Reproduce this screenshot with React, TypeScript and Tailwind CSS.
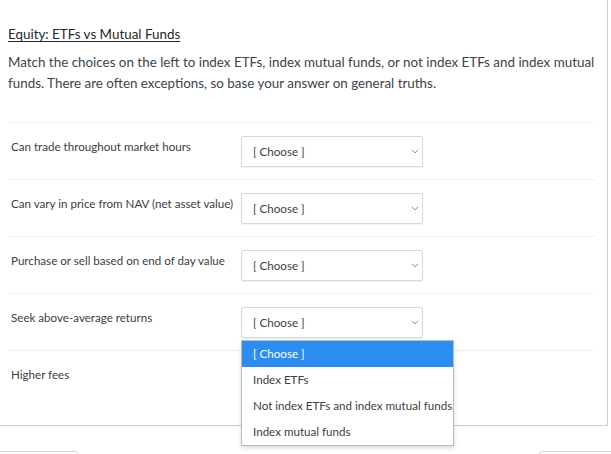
import React from "react";

const rows = [
  "Can trade throughout market hours",
  "Can vary in price from NAV (net asset value)",
  "Purchase or sell based on end of day value",
  "Seek above-average returns",
];

const options = [
  "[ Choose ]",
  "Index ETFs",
  "Not index ETFs and index mutual funds",
  "Index mutual funds",
];

const Chevron = () => (
  <svg width="8" height="5" viewBox="0 0 8 5" fill="none">
    <path d="M0.8 0.8 L4 3.8 L7.2 0.8" stroke="#8a8f94" strokeWidth="1" />
  </svg>
);

const SelectBox = () => (
  <div className="w-[182px] h-[31px] mt-[13px] border border-[#d5d9dc] rounded-[2px] shadow-[0_1px_1px_rgba(0,0,0,0.06)] bg-white flex items-center justify-between pl-[11px] pr-[3px]">
    <span className="text-[11.6px] text-[#3a4147]">[ Choose ]</span>
    <Chevron />
  </div>
);

const App = () => {
  return (
    <div className="w-[611px] h-[454px] bg-white relative overflow-hidden font-['Lato','Open_Sans',sans-serif] text-[#3a4045]">
      <div className="w-[608px] h-[426px] border-r border-b border-[#c9cdd0] pl-2 pr-[13px] pt-[25px]">
        <h2 className="text-[13.4px] leading-[18px] text-[#22282d] underline underline-offset-2">
          Equity: ETFs vs Mutual Funds
        </h2>
        <p className="mt-[9px] -mr-[10px] text-[13.4px] leading-[21px] text-[#3d4449]">
          Match the choices on the left to index ETFs, index mutual funds, or not index ETFs and index mutual funds. There are often exceptions, so base your answer on general truths.
        </p>
        <div className="mt-[28px]">
          {rows.map((label) => (
            <div key={label} className="h-[57px] border-t border-[#eceef0] flex items-start">
              <div className="w-[233px] pl-[3px] pt-[16px] text-[11.6px] leading-[16px] whitespace-nowrap">
                {label}
              </div>
              <SelectBox />
            </div>
          ))}
          <div className="border-t border-[#eceef0] flex items-start">
            <div className="w-[233px] pl-[3px] pt-[16px] text-[11.6px] leading-[16px]">
              Higher fees
            </div>
          </div>
        </div>
      </div>

      <div className="absolute left-[241px] top-[340px] w-[213px] bg-white border border-[#b9bdc1] shadow-[0_2px_4px_rgba(0,0,0,0.15)]">
        {options.map((opt, i) => (
          <div
            key={opt}
            className={
              i === 0
                ? "h-[26px] flex items-center pl-[11px] text-[11.6px] bg-[#2b8def] text-white"
                : "h-[26px] flex items-center pl-[11px] text-[11.6px] text-[#3a4147] whitespace-nowrap"
            }
          >
            {opt}
          </div>
        ))}
      </div>

      <div className="flex justify-between mt-[25px]">
        <div className="w-[80px] h-[20px] border border-[#d3d8de] rounded-[3px] -ml-[2px]" />
        <div className="w-[76px] h-[20px] border border-[#d3d8de] rounded-[3px] -mr-[4px]" />
      </div>
    </div>
  );
};

export default App;
